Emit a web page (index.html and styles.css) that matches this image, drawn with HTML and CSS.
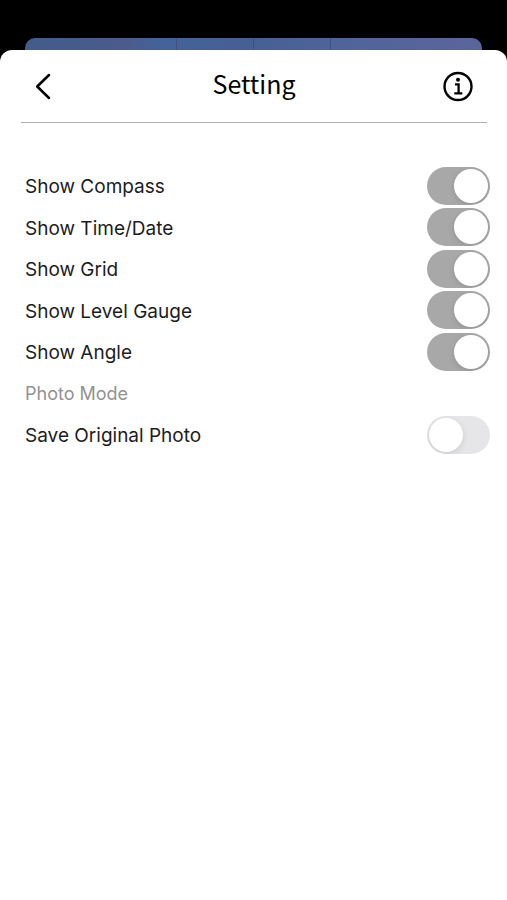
FILE: index.html
```
<!DOCTYPE html>
<html lang="en">
<head>
    <meta charset="UTF-8">
    <meta name="viewport" content="width=device-width, initial-scale=1.0">
    <title>Setting</title>
    <link rel="stylesheet" href="styles.css">
</head>
<body>
    <div class="backdrop">
        <span></span><span></span><span></span><span></span><span></span><span></span>
    </div>

    <main class="sheet">
        <header class="header">
            <button class="icon-button" type="button" aria-label="Back">
                <svg width="36" height="36" viewBox="0 0 36 36" fill="none" stroke="#000" stroke-width="2.5" stroke-linecap="round" stroke-linejoin="round">
                    <path d="M17 7L5.2 18.5L17 30"/>
                </svg>
            </button>
            <h1>Setting</h1>
            <button class="icon-button" type="button" aria-label="Information">
                <svg width="36" height="36" viewBox="0 0 36 36" fill="none" stroke="#000" stroke-width="2.4">
                    <circle cx="18" cy="18.5" r="13.5"/>
                    <circle cx="18" cy="11.7" r="2" fill="#000" stroke="none"/>
                    <path d="M15 16.3H18.6V25.4M14.3 25.4H22.3" stroke-width="2.3"/>
                </svg>
            </button>
        </header>

        <form class="settings">
            <div class="row">
                <label for="compass">Show Compass</label>
                <input class="toggle" type="checkbox" role="switch" id="compass" checked>
            </div>
            <div class="row">
                <label for="time">Show Time/Date</label>
                <input class="toggle" type="checkbox" role="switch" id="time" checked>
            </div>
            <div class="row">
                <label for="grid">Show Grid</label>
                <input class="toggle" type="checkbox" role="switch" id="grid" checked>
            </div>
            <div class="row">
                <label for="level">Show Level Gauge</label>
                <input class="toggle" type="checkbox" role="switch" id="level" checked>
            </div>
            <div class="row">
                <label for="angle">Show Angle</label>
                <input class="toggle" type="checkbox" role="switch" id="angle" checked>
            </div>
            <h2>Photo Mode</h2>
            <div class="row">
                <label for="original">Save Original Photo</label>
                <input class="toggle" type="checkbox" role="switch" id="original">
            </div>
        </form>
    </main>
</body>
</html>
```
FILE: styles.css
```
* {
    box-sizing: border-box;
}
body {
    display: flex;
    flex-direction: column;
    min-height: 100vh;
    margin: 0;
    padding-top: 38px;
    background: #000;
    color: #1c1c1e;
    font-family: Inter, "Liberation Sans", sans-serif;
    font-size: 19px;
}
/* top edge of the camera screen behind the sheet */
.backdrop {
    display: flex;
    height: 12px;
    margin: 0 25px;
    border-radius: 10px 10px 0 0;
    background: linear-gradient(90deg, #425c8c, #4b5b8e 22%, #43639a 30%, #465f94 50%, #50649b 70%, #5a659b);
    overflow: hidden;
}
.backdrop span {
    flex: 1;
}
.backdrop span:nth-child(n+2):nth-child(-n+4) {
    border-right: 1px solid #3e5281;
}
.sheet {
    flex: 1;
    background: #fff;
    border-radius: 12px 12px 0 0;
}
.header {
    display: flex;
    justify-content: space-between;
    align-items: center;
    height: 73px;
    margin: 0 20px 0 21px;
    padding: 0 11px;
    border-bottom: 1px solid #b0b0b0;
}
.header h1 {
    margin: 0;
    padding-bottom: 6px;
    color: #000;
    font-family: "Noto Sans CJK KR", "Noto Sans", sans-serif;
    font-size: 25px;
    font-weight: 400;
    line-height: 32px;
}
.icon-button {
    width: 36px;
    height: 36px;
    padding: 0;
    border: none;
    background: none;
    cursor: pointer;
}
.icon-button svg {
    display: block;
}
.settings {
    padding: 42px 17px 0 25px;
}
.row {
    display: flex;
    justify-content: space-between;
    align-items: center;
    height: 41px;
}
.row:nth-child(even) {
    height: 42px;
}
.row label {
    padding-top: 2px;
}
.settings h2 {
    margin: 0;
    padding-top: 1px;
    color: #929292;
    font-size: 18px;
    font-weight: 400;
    line-height: 41px;
}
.toggle {
    appearance: none;
    display: flex;
    align-items: center;
    width: 63px;
    height: 38px;
    margin: 0;
    padding: 2px;
    border-radius: 19px;
    background: #e6e6e8;
    overflow: hidden;
    cursor: pointer;
}
.toggle::before {
    content: "";
    width: 34px;
    height: 34px;
    border-radius: 50%;
    background: #fff;
    box-shadow: 0 2px 6px rgba(0, 0, 0, 0.12);
}
.toggle:checked {
    justify-content: flex-end;
    background: #a8a8a8;
}
```
